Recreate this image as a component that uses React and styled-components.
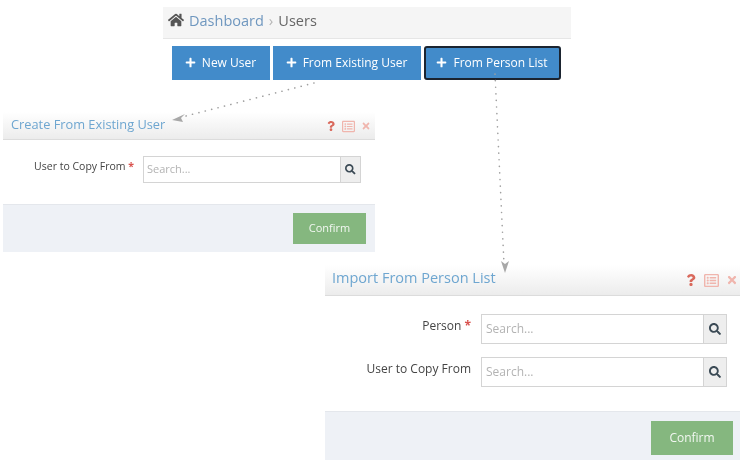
import React from "react"
import styled, { createGlobalStyle } from "styled-components"
import { FaHome, FaPlus, FaQuestion, FaRegListAlt, FaSearch, FaTimes } from "react-icons/fa"

const GlobalStyle = createGlobalStyle`
  html, body {
    margin: 0;
    padding: 0;
    background: #fff;
  }
  * {
    box-sizing: border-box;
  }
`

const Canvas = styled.div`
  position: relative;
  width: 744px;
  height: 463px;
  overflow: hidden;
  background: #fff;
  font-family: "Open Sans", "Liberation Sans", sans-serif;
  filter: blur(0.35px);
`

const TopShot = styled.div`
  position: absolute;
  left: 163px;
  top: 7px;
  width: 408px;
`

const Breadcrumb = styled.div`
  display: flex;
  align-items: center;
  height: 32px;
  padding: 0 0 5px 5px;
  background: #f5f5f5;
  border-bottom: 1px solid #e6e6e6;
  font-size: 14.5px;
  svg {
    color: #555;
    font-size: 16px;
    margin-right: 5px;
  }
`

const Crumb = styled.span`
  color: #6f97bf;
`

const Sep = styled.span`
  color: #b5b5b5;
  font-size: 15px;
  margin: 0 5px;
`

const Current = styled.span`
  color: #666;
`

const Actions = styled.div`
  display: flex;
  align-items: center;
  gap: 3px;
  padding: 7px 0 0 8.5px;
`

const ActionButton = styled.button`
  display: flex;
  align-items: center;
  justify-content: center;
  gap: 6px;
  height: 34px;
  width: ${(p) => p.$w}px;
  padding: 0 0 2px;
  border: ${(p) => (p.$active ? "2px solid #1b2430" : "none")};
  border-radius: ${(p) => (p.$active ? "3px" : "0")};
  background: #428bca;
  color: #fff;
  font-family: inherit;
  font-size: 12px;
  svg {
    font-size: 11px;
  }
`

const Dialog = styled.section`
  position: absolute;
  left: ${(p) => p.$x}px;
  top: ${(p) => p.$y}px;
  width: ${(p) => p.$w}px;
  display: flex;
  flex-direction: column;
`

const DialogHeader = styled.header`
  display: flex;
  align-items: center;
  justify-content: space-between;
  height: ${(p) => (p.$big ? 31 : 28)}px;
  padding: ${(p) => (p.$big ? "0 2px 5px 7px" : "0 4px 4px 8px")};
  background: linear-gradient(#ffffff, #ececec);
  border-bottom: 1px solid #dcdcdc;
`

const DialogTitle = styled.h2`
  margin: 0;
  font-size: ${(p) => (p.$big ? 14.5 : 12.8)}px;
  font-weight: 400;
  color: #6ea6d0;
`

const HeaderIcons = styled.div`
  display: flex;
  align-items: center;
  gap: ${(p) => (p.$big ? 7 : 6)}px;
  margin-top: 5px;
  font-size: ${(p) => (p.$big ? 12 : 10)}px;
  svg:nth-child(1) {
    color: #d9695c;
  }
  svg:nth-child(2),
  svg:nth-child(3) {
    color: #f0b5ad;
  }
  svg:nth-child(2) {
    font-size: ${(p) => (p.$big ? 15 : 13)}px;
  }
`

const DialogBody = styled.div`
  display: flex;
  flex-direction: column;
  height: ${(p) => (p.$big ? 115 : 64)}px;
  gap: ${(p) => (p.$big ? 13 : 0)}px;
  padding-top: ${(p) => (p.$big ? 18 : 16)}px;
  background: #fff;
`

const Field = styled.div`
  display: flex;
  align-items: flex-start;
`

const Label = styled.label`
  flex: none;
  width: ${(p) => (p.$big ? 146 : 131)}px;
  padding-top: 3px;
  text-align: right;
  font-size: ${(p) => (p.$big ? 12 : 10.5)}px;
  font-weight: 500;
  color: #444;
  b {
    color: #d9534f;
    font-weight: 700;
  }
`

const SearchBox = styled.div`
  display: flex;
  width: ${(p) => (p.$big ? 246 : 218)}px;
  height: ${(p) => (p.$big ? 30 : 27)}px;
  margin-left: ${(p) => (p.$big ? 10 : 9)}px;
  border: 1px solid #d4d4d4;
  background: #fff;
`

const Placeholder = styled.span`
  flex: 1;
  display: flex;
  align-items: center;
  padding: 0 0 ${(p) => (p.$big ? 1 : 2)}px ${(p) => (p.$big ? 4 : 3)}px;
  font-size: ${(p) => (p.$big ? 12 : 11)}px;
  color: #b3b3b3;
`

const SearchAddon = styled.span`
  flex: none;
  display: flex;
  align-items: center;
  justify-content: center;
  width: ${(p) => (p.$big ? 23 : 20)}px;
  background: #eeeeee;
  border-left: 1px solid #d4d4d4;
  color: #3b4a55;
  font-size: ${(p) => (p.$big ? 12 : 10.5)}px;
`

const DialogFooter = styled.footer`
  display: flex;
  align-items: flex-start;
  justify-content: flex-end;
  height: ${(p) => (p.$big ? 49 : 48)}px;
  padding: ${(p) => (p.$big ? "9px 7px 0 0" : "8px 9px 0 0")};
  background: #eef1f6;
  border-top: 1px solid #e4e7ec;
`

const ConfirmButton = styled.button`
  width: ${(p) => (p.$big ? 82 : 73)}px;
  height: ${(p) => (p.$big ? 34 : 31)}px;
  padding: 0 0 2px;
  border: none;
  background: #85b77f;
  color: #f2f7f1;
  font-family: inherit;
  font-size: ${(p) => (p.$big ? 12 : 11)}px;
`

const Arrows = styled.svg`
  position: absolute;
  left: 0;
  top: 0;
  pointer-events: none;
`

const ExportDialog = ({ big, x, y, w, title, fields }) => (
  <Dialog $x={x} $y={y} $w={w}>
    <DialogHeader $big={big}>
      <DialogTitle $big={big}>{title}</DialogTitle>
      <HeaderIcons $big={big}>
        <FaQuestion />
        <FaRegListAlt />
        <FaTimes />
      </HeaderIcons>
    </DialogHeader>
    <DialogBody $big={big}>
      {fields.map((f) => (
        <Field key={f.label}>
          <Label $big={big}>
            {f.label}
            {f.required && <b> *</b>}
          </Label>
          <SearchBox $big={big}>
            <Placeholder $big={big}>Search...</Placeholder>
            <SearchAddon $big={big}>
              <FaSearch />
            </SearchAddon>
          </SearchBox>
        </Field>
      ))}
    </DialogBody>
    <DialogFooter $big={big}>
      <ConfirmButton $big={big}>Confirm</ConfirmButton>
    </DialogFooter>
  </Dialog>
)

export default function App() {
  return (
    <Canvas>
      <GlobalStyle />
      <TopShot>
        <Breadcrumb>
          <FaHome />
          <Crumb>Dashboard</Crumb>
          <Sep>›</Sep>
          <Current>Users</Current>
        </Breadcrumb>
        <Actions>
          <ActionButton $w={98}>
            <FaPlus /> New User
          </ActionButton>
          <ActionButton $w={148}>
            <FaPlus /> From Existing User
          </ActionButton>
          <ActionButton $w={137} $active>
            <FaPlus /> From Person List
          </ActionButton>
        </Actions>
      </TopShot>

      <ExportDialog
        x={3}
        y={112}
        w={372}
        title="Create From Existing User"
        fields={[{ label: "User to Copy From", required: true }]}
      />
      <ExportDialog
        big
        x={325}
        y={265}
        w={415}
        title="Import From Person List"
        fields={[
          { label: "Person", required: true },
          { label: "User to Copy From" },
        ]}
      />

      <Arrows width="744" height="463" viewBox="0 0 744 463">
        <path d="M314 83 L182 117" stroke="#a0a0a0" strokeWidth="1.6" strokeDasharray="0.1 6.5" strokeLinecap="round" fill="none" />
        <path d="M172 120 L185 114 L181 118 L183 122 Z" fill="#a8a8a8" />
        <path d="M495 74 L504 264" stroke="#a0a0a0" strokeWidth="1.6" strokeDasharray="0.1 6.5" strokeLinecap="round" fill="none" />
        <path d="M505 273 L501 261 L505 264 L509 261 Z" fill="#a8a8a8" />
      </Arrows>
    </Canvas>
  )
}
